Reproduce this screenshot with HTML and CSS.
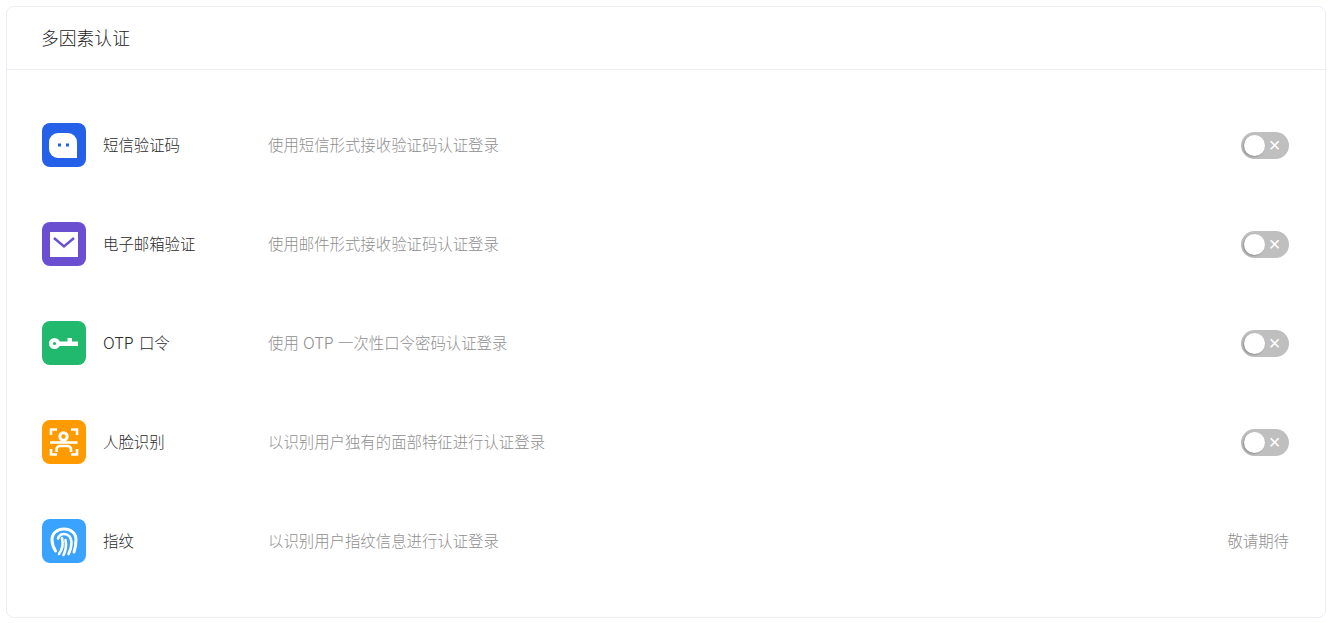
FILE: index.html
```html
<!DOCTYPE html>
<html>
<head>
    <title>多因素认证</title>
    <meta name="viewport" content="width=device-width, initial-scale=1">
    <link rel="stylesheet" href="styles.css">
</head>
<body>
    <div class="card">
        <div class="card-title">多因素认证</div>
        <div class="card-body">
            <div class="row">
                <span class="icon icon-sms">
                    <svg width="44" height="44" viewBox="0 0 44 44">
                        <path d="M16 10h10a9 9 0 0 1 9 9v16H16a9 9 0 0 1-9-9v-7a9 9 0 0 1 9-9z" fill="#fff"/>
                        <rect x="16" y="20.500" width="3" height="3" fill="#2460e8"/>
                        <rect x="24" y="20.500" width="3" height="3" fill="#2460e8"/>
                    </svg>
                </span>
                <span class="name">短信验证码</span>
                <span class="desc">使用短信形式接收验证码认证登录</span>
                <span class="switch"><i class="knob"></i><span class="cross">×</span></span>
            </div>
            <div class="row">
                <span class="icon icon-mail">
                    <svg width="44" height="44" viewBox="0 0 44 44">
                        <rect x="8" y="10" width="28" height="25" fill="#fff"/>
                        <path d="M12 16l10 8.500 10-8.500" fill="none" stroke="#6a4fd0" stroke-width="2.400"/>
                    </svg>
                </span>
                <span class="name">电子邮箱验证</span>
                <span class="desc">使用邮件形式接收验证码认证登录</span>
                <span class="switch"><i class="knob"></i><span class="cross">×</span></span>
            </div>
            <div class="row">
                <span class="icon icon-otp">
                    <svg width="44" height="44" viewBox="0 0 44 44">
                        <circle cx="12.500" cy="22.500" r="3.600" fill="none" stroke="#fff" stroke-width="4"/>
                        <path d="M17 20.500h19v4.500H17zM25.500 17h4.500v4h-4.500z" fill="#fff"/>
                    </svg>
                </span>
                <span class="name">OTP 口令</span>
                <span class="desc">使用 OTP 一次性口令密码认证登录</span>
                <span class="switch"><i class="knob"></i><span class="cross">×</span></span>
            </div>
            <div class="row">
                <span class="icon icon-face">
                    <svg width="44" height="44" viewBox="0 0 44 44" fill="none" stroke="#fff" stroke-width="2.600">
                        <path d="M15 9.500H9V15M29 9.500h6V15M15 34.500H9V29M29 34.500h6V29"/>
                        <circle cx="21.500" cy="16.500" r="3.700" stroke-width="3"/>
                        <path d="M8 22.500h27.500"/>
                        <path d="M14.500 32v-2.500c0-2 1.500-3.500 3.500-3.500h7.500c2 0 3.500 1.500 3.500 3.500V32"/>
                    </svg>
                </span>
                <span class="name">人脸识别</span>
                <span class="desc">以识别用户独有的面部特征进行认证登录</span>
                <span class="switch"><i class="knob"></i><span class="cross">×</span></span>
            </div>
            <div class="row">
                <span class="icon icon-finger">
                    <svg width="44" height="44" viewBox="0 0 44 44" fill="none" stroke="#fff" stroke-width="2.600" stroke-linecap="round">
                        <path d="M13.500 32C11 28 10 24 10 20.500 10 14 15.500 10 22 10s12 4 12 10.500c0 4.500-.5 8.500-2 12.500" stroke-width="3"/>
                        <path d="M16 19.500c1-3 3.500-4.500 6-4.500 4.500 0 7.500 3.500 7.500 8 0 4.500-1 8.500-3 12"/>
                        <path d="M20 19c1.500 6 .8 11-3 16"/>
                        <path d="M23.500 21c1 5 .5 10-2 15"/>
                    </svg>
                </span>
                <span class="name">指纹</span>
                <span class="desc">以识别用户指纹信息进行认证登录</span>
                <span class="soon">敬请期待</span>
            </div>
        </div>
    </div>
</body>
</html>
```

FILE: styles.css
```css
/* page */
html, body {
    height: 100%;
}

body {
    margin: 0;
    padding: 6px 5px 5px 6px;
    box-sizing: border-box;
    background-color: #fff;
    font-family: "Inter", "Noto Sans CJK SC", sans-serif;
    font-weight: 300;
}

.card {
    height: 100%;
    box-sizing: border-box;
    background-color: #fff;
    border: 1px solid #ebeef5;
    border-radius: 8px;
}

.card-title {
    height: 63px;
    box-sizing: border-box;
    padding-left: 34px;
    border-bottom: 1px solid #ebeef5;
    font-size: 17.8px;
    line-height: 64px;
    color: #222;
}

.card-body {
    padding: 25.7px 36px 0 35px;
}

/* rows */
.row {
    display: flex;
    align-items: center;
    height: 99px;
    font-size: 15.4px;
}

.icon {
    flex: none;
    width: 44px;
    height: 44px;
    margin-right: 17px;
    border-radius: 8px;
}

.icon svg {
    display: block;
}

.icon-sms { background-color: #2460e8; }
.icon-mail { background-color: #6a4fd0; }
.icon-otp { background-color: #20b96e; }
.icon-face { background-color: #ff9b00; }
.icon-finger { background-color: #3aa2ff; }

.name, .desc, .soon {
    padding-bottom: 3px;
}

.name {
    flex: none;
    width: 165px;
    word-spacing: 1px;
    color: #2b2b2b;
}

.desc {
    flex: 1;
    color: #8f8f8f;
}

.soon {
    color: #8f8f8f;
}

/* switch */
.switch {
    position: relative;
    flex: none;
    width: 48px;
    height: 27px;
    border-radius: 14px;
    background-color: #bfbfbf;
}

.knob {
    position: absolute;
    left: 3px;
    top: 3px;
    width: 21px;
    height: 21px;
    border-radius: 50%;
    background-color: #fff;
    box-shadow: -1px 1px 2px rgba(0, 0, 0, 0.25);
}

.cross {
    position: absolute;
    left: 26.500px;
    top: 0;
    width: 14px;
    text-align: center;
    font-family: "Liberation Sans", sans-serif;
    font-size: 20px;
    line-height: 26px;
    color: #fff;
}
```
